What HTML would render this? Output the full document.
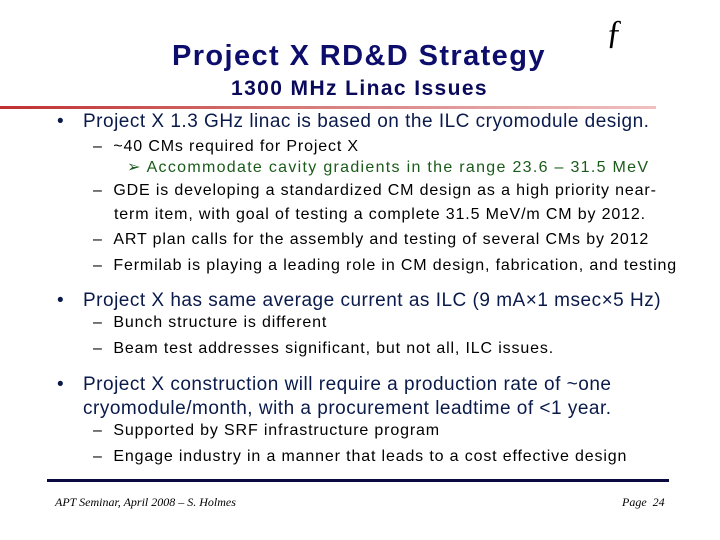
<!DOCTYPE html>
<html><head><style>
body{margin:0;width:720px;height:540px;background:#fff;position:relative;overflow:hidden;font-family:"Liberation Sans",Arial,sans-serif;color:#000}
.a{position:absolute;white-space:nowrap}
.t{font-weight:bold;color:#0d0d6b}
.b{font-size:19px;color:#0a1a4a;letter-spacing:0.5px}
.s{font-size:16px;color:#000;letter-spacing:0.85px}
.g{font-size:16px;color:#1a5a1a;letter-spacing:1.3px}
</style></head><body>
<div class="a t" style="left:172px;top:40px;font-size:29px;letter-spacing:1.4px">Project X RD&amp;D Strategy</div>
<div class="a" style="left:606px;top:14px;font-size:34px;font-family:'Liberation Serif',serif">ƒ</div>
<div class="a t" style="left:231px;top:77px;font-size:21px;color:#0a0a5a;letter-spacing:1.4px">1300 MHz Linac Issues</div>
<div class="a" style="left:0;top:106px;width:656px;height:3px;background:linear-gradient(to right,#c03030,#d88080 50%,#f0c0c0)"></div>

<div class="a b" style="left:57px;top:111px">•</div>
<div class="a b" style="left:83px;top:111px">Project X 1.3 GHz linac is based on the ILC cryomodule design.</div>
<div class="a s" style="left:93px;top:138px">– &nbsp;~40 CMs required for Project X</div>
<div class="a g" style="left:127px;top:157px">➢ Accommodate cavity gradients in the range 23.6 – 31.5 MeV</div>
<div class="a s" style="left:93px;top:182px">– &nbsp;GDE is developing a standardized CM design as a high priority near-</div>
<div class="a s" style="left:114px;top:206px">term item, with goal of testing a complete 31.5 MeV/m CM by 2012.</div>
<div class="a s" style="left:93px;top:231px">– &nbsp;ART plan calls for the assembly and testing of several CMs by 2012</div>
<div class="a s" style="left:93px;top:257px">– &nbsp;Fermilab is playing a leading role in CM design, fabrication, and testing</div>

<div class="a b" style="left:57px;top:290px">•</div>
<div class="a b" style="left:83px;top:290px">Project X has same average current as ILC (9 mA×1 msec×5 Hz)</div>
<div class="a s" style="left:93px;top:314px">– &nbsp;Bunch structure is different</div>
<div class="a s" style="left:93px;top:340px">– &nbsp;Beam test addresses significant, but not all, ILC issues.</div>

<div class="a b" style="left:57px;top:374px">•</div>
<div class="a b" style="left:83px;top:374px">Project X construction will require a production rate of ~one</div>
<div class="a b" style="left:83px;top:398px">cryomodule/month, with a procurement leadtime of &lt;1 year.</div>
<div class="a s" style="left:93px;top:422px">– &nbsp;Supported by SRF infrastructure program</div>
<div class="a s" style="left:93px;top:448px">– &nbsp;Engage industry in a manner that leads to a cost effective design</div>

<div class="a" style="left:47px;top:479px;width:622px;height:3px;background:#0a0a40"></div>
<div class="a" style="left:55px;top:495px;font-size:12px;font-style:italic;font-family:'Liberation Serif',serif">APT Seminar, April 2008 – S. Holmes</div>
<div class="a" style="left:622px;top:495px;font-size:12px;font-style:italic;font-family:'Liberation Serif',serif">Page&nbsp; 24</div>
</body></html>
